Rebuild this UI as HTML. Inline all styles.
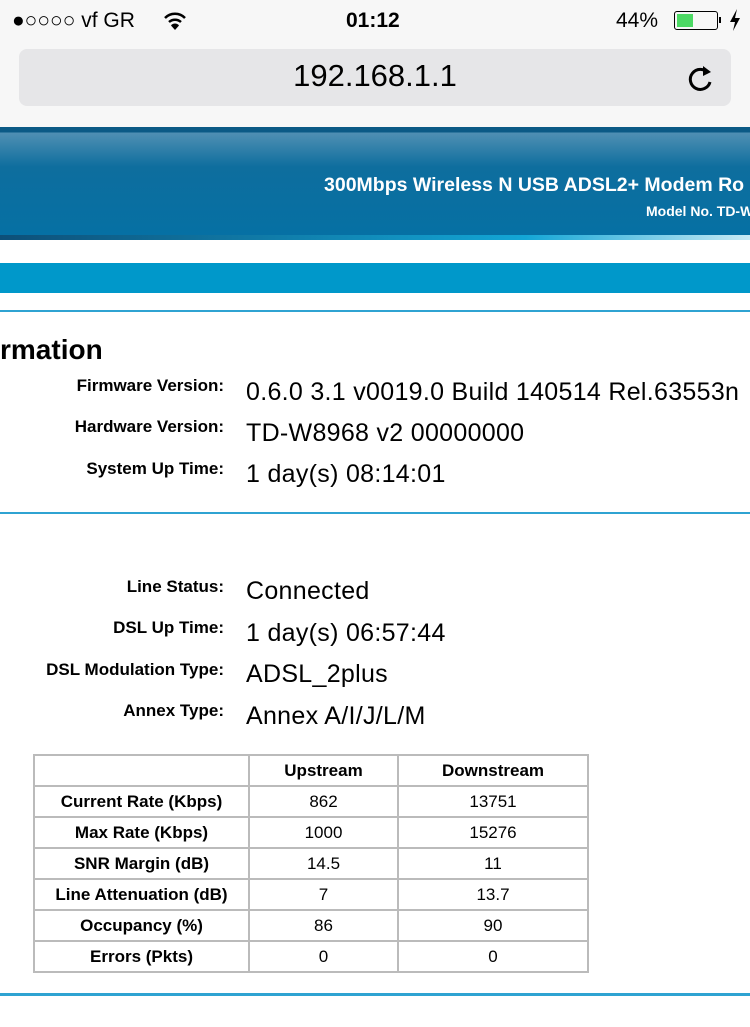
<!DOCTYPE html>
<html><head><meta charset="utf-8"><style>
body{margin:0;width:750px;height:1027px;overflow:hidden;background:#fff;font-family:"Liberation Sans",Arial,sans-serif;position:relative}
.abs{position:absolute}
.lbl{position:absolute;right:526px;font-weight:bold;font-size:17px;color:#000;white-space:nowrap}
.val{position:absolute;left:246px;font-size:25px;letter-spacing:0.3px;color:#000;white-space:nowrap}
table{position:absolute;left:33px;top:754px;border-collapse:collapse;font-size:17px}
td{border:2px solid #bbb;height:29px;text-align:center;padding:0}
td:first-child{font-weight:bold}
</style></head><body>
<div class="abs" style="left:0;top:0;width:750px;height:127px;background:#f7f7f7"></div>
<div class="abs" style="left:12px;top:9px;font-size:21px">●○○○○ vf GR</div>
<svg class="abs" style="left:163px;top:11px" width="24" height="20" viewBox="0 0 24 20"><path d="M2 7 A14 14 0 0 1 22 7" stroke="#000" stroke-width="2.5" fill="none"/><path d="M6 11 A9 9 0 0 1 18 11" stroke="#000" stroke-width="2.5" fill="none"/><path d="M12 19 L8 14.5 A5 5 0 0 1 16 14.5 Z" fill="#000"/></svg>
<div class="abs" style="left:346px;top:9px;font-size:21px;font-weight:bold">01:12</div>
<div class="abs" style="left:616px;top:9px;font-size:21px">44%</div>
<div class="abs" style="left:674px;top:11px;width:42px;height:17px;border:1.5px solid #000;border-radius:3px"><div style="margin:2px;width:16px;height:13px;background:#4cd964"></div></div>
<div class="abs" style="left:719px;top:17px;width:2px;height:6px;background:#000"></div>
<svg class="abs" style="left:729px;top:9px" width="12" height="22" viewBox="0 0 12 22"><path d="M8 0 L1 13 H6 L4 22 L11 9 H6 Z" fill="#000"/></svg>
<div class="abs" style="left:19px;top:49px;width:712px;height:57px;background:#e6e6e8;border-radius:8px"></div>
<div class="abs" style="left:0;top:58px;width:750px;text-align:center;font-size:31px">192.168.1.1</div>
<svg class="abs" style="left:686px;top:62px" width="30" height="32" viewBox="0 0 30 32"><path d="M22 11 A10 10 0 1 0 24 20" stroke="#000" stroke-width="3" fill="none"/><path d="M17 4 L25 10 L17 14 Z" fill="#000"/></svg>
<div class="abs" style="left:0;top:127px;width:750px;height:113px;background:linear-gradient(#0b5a86 0,#0b5a86 5px,#4f8fb3 6px,#0e6e9e 40px,#0570a4 100%)"></div>
<div class="abs" style="left:0;top:235px;width:750px;height:5px;background:linear-gradient(90deg,#0d4f78,#13a6d6 70%,#c8eaf5)"></div>
<div class="abs" style="left:324px;top:174px;font-size:19.5px;font-weight:bold;color:#fff;white-space:nowrap">300Mbps Wireless N USB ADSL2+ Modem Ro</div>
<div class="abs" style="left:646px;top:203px;font-size:14px;font-weight:bold;color:#fff;white-space:nowrap">Model No. TD-W</div>
<div class="abs" style="left:0;top:263px;width:750px;height:30px;background:#0098ca"></div>
<div class="abs" style="left:0;top:310px;width:750px;height:2px;background:#2fa3d2"></div>
<div class="abs" style="left:0;top:334px;font-size:28px;font-weight:bold">rmation</div>
<div class="lbl" style="top:376px">Firmware Version:</div><div class="val" style="top:378px">0.6.0 3.1 v0019.0 Build 140514 Rel.63553n</div>
<div class="lbl" style="top:417px">Hardware Version:</div><div class="val" style="top:419px">TD-W8968 v2 00000000</div>
<div class="lbl" style="top:459px">System Up Time:</div><div class="val" style="top:460px">1 day(s) 08:14:01</div>
<div class="abs" style="left:0;top:512px;width:750px;height:2px;background:#2fa3d2"></div>
<div class="lbl" style="top:577px">Line Status:</div><div class="val" style="top:577px">Connected</div>
<div class="lbl" style="top:618px">DSL Up Time:</div><div class="val" style="top:619px">1 day(s) 06:57:44</div>
<div class="lbl" style="top:660px">DSL Modulation Type:</div><div class="val" style="top:660px">ADSL_2plus</div>
<div class="lbl" style="top:701px">Annex Type:</div><div class="val" style="top:702px">Annex A/I/J/L/M</div>
<table>
<tr><td style="width:213px"></td><td style="width:147px;font-weight:bold">Upstream</td><td style="width:188px;font-weight:bold">Downstream</td></tr>
<tr><td>Current Rate (Kbps)</td><td>862</td><td>13751</td></tr>
<tr><td>Max Rate (Kbps)</td><td>1000</td><td>15276</td></tr>
<tr><td>SNR Margin (dB)</td><td>14.5</td><td>11</td></tr>
<tr><td>Line Attenuation (dB)</td><td>7</td><td>13.7</td></tr>
<tr><td>Occupancy (%)</td><td>86</td><td>90</td></tr>
<tr><td>Errors (Pkts)</td><td>0</td><td>0</td></tr>
</table>
<div class="abs" style="left:0;top:993px;width:750px;height:3px;background:#2fa3d2"></div>
</body></html>
